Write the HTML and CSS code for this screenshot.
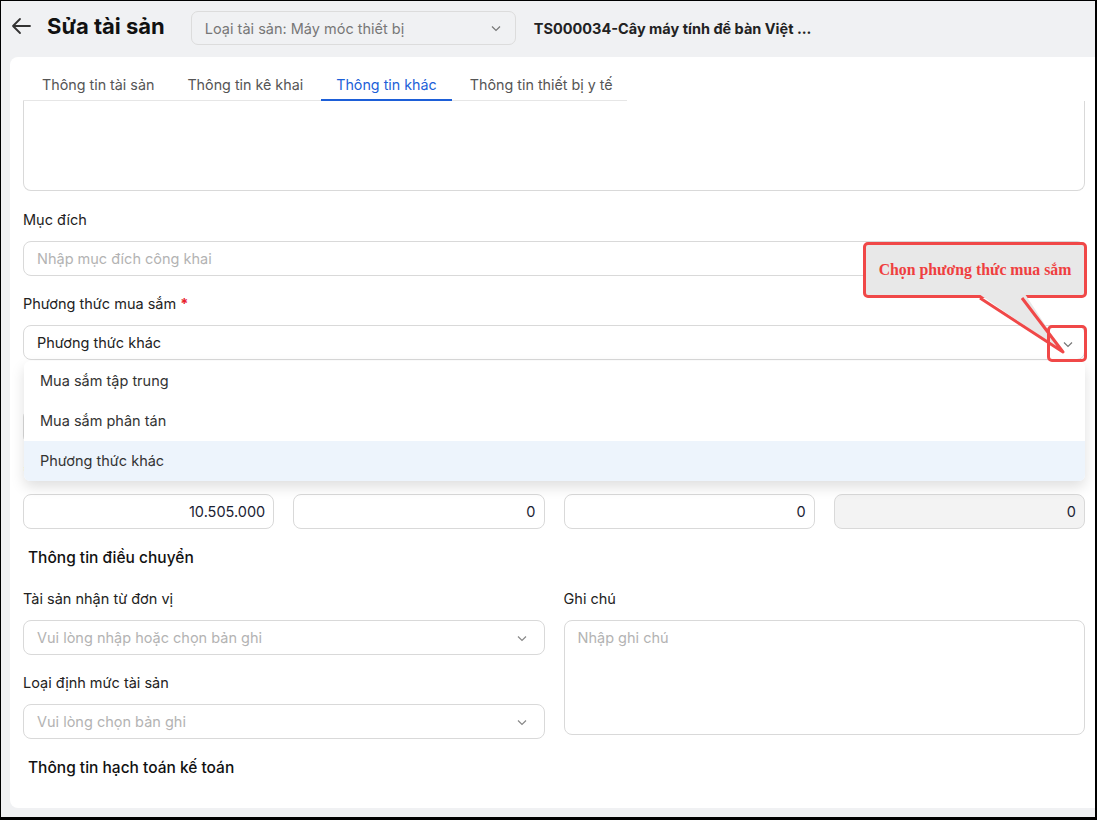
FILE: index.html
```html
<!DOCTYPE html>
<html lang="vi">
  <head>
    <meta charset="UTF-8" />
    <meta name="viewport" content="width=device-width, initial-scale=1.0" />
    <title>Sửa tài sản</title>
    <link rel="stylesheet" href="styles.css">
  </head>
  <body>
    <div class="app">
      <header class="topbar">
        <button class="back" aria-label="Quay lại">
          <svg width="20" height="18" viewBox="0 0 20 18"><path d="M19 9H2M9 2L2 9l7 7" fill="none" stroke="#333" stroke-width="1.8" stroke-linecap="round" stroke-linejoin="round"/></svg>
        </button>
        <h1 class="title">Sửa tài sản</h1>
        <div class="type-select">
          <span>Loại tài sản: Máy móc thiết bị</span>
          <svg class="chev" width="12" height="12" viewBox="0 0 12 12"><path d="M2 4.5l4 4 4-4" fill="none" stroke="#777" stroke-width="1.2"/></svg>
        </div>
        <div class="asset-code">TS000034-Cây máy tính để bàn Việt ...</div>
      </header>

      <section class="card">
        <nav class="tabs">
          <div class="tab">Thông tin tài sản</div>
          <div class="tab">Thông tin kê khai</div>
          <div class="tab active">Thông tin khác</div>
          <div class="tab">Thông tin thiết bị y tế</div>
        </nav>

        <div class="form">
          <div class="box cut"></div>

          <div class="field">
            <label class="label">Mục đích</label>
            <div class="input placeholder">Nhập mục đích công khai</div>
          </div>

          <div class="field purchase">
            <label class="label">Phương thức mua sắm <span class="req">*</span></label>
            <div class="input select">
              <span>Phương thức khác</span>
            </div>

            <ul class="dropdown">
              <li>Mua sắm tập trung</li>
              <li>Mua sắm phân tán</li>
              <li class="current">Phương thức khác</li>
            </ul>

            <div class="callout">Chọn phương thức mua sắm</div>
            <svg class="tail" width="100" height="66" viewBox="0 0 100 66">
              <polygon points="4,0 50,0 88,58" fill="#e8e8e8"/>
              <path d="M5 4L88 58L47 4" fill="none" stroke="#f04848" stroke-width="3" stroke-linejoin="round"/>
            </svg>
            <div class="mark">
              <svg width="12" height="12" viewBox="0 0 12 12"><path d="M2 4.5l4 4 4-4" fill="none" stroke="#777" stroke-width="1.2"/></svg>
            </div>
          </div>

          <div class="field">
            <div class="label"></div>
            <div class="input"></div>
          </div>

          <div class="label-row"><span class="req">*</span></div>
          <div class="grid4">
            <div class="input num">10.505.000</div>
            <div class="input num">0</div>
            <div class="input num">0</div>
            <div class="input num disabled">0</div>
          </div>

          <h2 class="section">Thông tin điều chuyển</h2>

          <div class="grid2">
            <div class="col">
              <div class="field">
                <label class="label">Tài sản nhận từ đơn vị</label>
                <div class="input select placeholder">
                  <span>Vui lòng nhập hoặc chọn bản ghi</span>
                  <svg class="chev" width="12" height="12" viewBox="0 0 12 12"><path d="M2 4.5l4 4 4-4" fill="none" stroke="#888" stroke-width="1.2"/></svg>
                </div>
              </div>
              <div class="field">
                <label class="label">Loại định mức tài sản</label>
                <div class="input select placeholder">
                  <span>Vui lòng chọn bản ghi</span>
                  <svg class="chev" width="12" height="12" viewBox="0 0 12 12"><path d="M2 4.5l4 4 4-4" fill="none" stroke="#888" stroke-width="1.2"/></svg>
                </div>
              </div>
            </div>
            <div class="col">
              <div class="field">
                <label class="label">Ghi chú</label>
                <div class="box note placeholder">Nhập ghi chú</div>
              </div>
            </div>
          </div>

          <h2 class="section">Thông tin hạch toán kế toán</h2>
        </div>
      </section>
    </div>
  </body>
</html>
```

FILE: styles.css
```css
* {
  box-sizing: border-box;
}
body {
  margin: 0;
  font-family: Inter, "Noto Sans", sans-serif;
  font-size: 14px;
  color: #222;
}
.app {
  height: 820px;
  background-color: #f0f1f3;
  border-left: 1px solid #000;
  border-top: 1px solid #000;
  border-right: 2px solid #000;
  border-bottom: 3px solid #000;
}

/* header */
.topbar {
  height: 56px;
  display: flex;
  align-items: center;
  padding-left: 10px;
}
.back {
  background: none;
  border: 0;
  padding: 0;
  width: 20px;
  height: 18px;
  margin-top: -6px;
  cursor: pointer;
}
.title {
  margin: -6px 0 0 16px;
  font-size: 22px;
  font-weight: 700;
  color: #111;
}
.type-select {
  margin: -2px 0 0 26px;
  width: 325px;
  height: 34px;
  border: 1px solid #dcdcdc;
  border-radius: 7px;
  display: flex;
  align-items: center;
  justify-content: space-between;
  padding: 0 13px 0 13px;
  font-size: 14.5px;
  color: #777;
}
.asset-code {
  margin: -2px 0 0 18px;
  font-size: 14.5px;
  font-weight: 700;
  color: #222;
}

/* card */
.card {
  margin-left: 9px;
  height: 751px;
  background-color: #fff;
  border-radius: 8px 0 0 8px;
  padding: 10px 10px 0 13px;
}
.tabs {
  display: flex;
  gap: 3px;
  width: 604px;
  padding-left: 4px;
  border-bottom: 1px solid #e6e6e6;
}
.tab {
  flex-shrink: 0;
  white-space: nowrap;
  height: 34px;
  line-height: 35px;
  padding: 0 15px;
  font-size: 14.3px;
  color: #555;
  border-bottom: 2px solid transparent;
  margin-bottom: -1px;
}
.tab.active {
  color: #1d5fd8;
  border-bottom-color: #1d5fd8;
}

/* form */
.form {
  display: flex;
  flex-direction: column;
}
.box {
  border: 1px solid #d9d9d9;
  border-radius: 8px;
}
.box.cut {
  height: 90px;
  border-top: 0;
  border-radius: 0 0 8px 8px;
  margin-bottom: 19px;
}
.field {
  display: flex;
  flex-direction: column;
  margin-bottom: 18px;
}
.label {
  height: 20px;
  line-height: 20px;
  margin-bottom: 11px;
  font-size: 14.5px;
  color: #222;
}
.req {
  color: #e8202a;
  font-weight: 700;
}
.input {
  height: 35px;
  border: 1px solid #d9d9d9;
  border-radius: 8px;
  padding: 0 13px;
  display: flex;
  align-items: center;
  font-size: 14.5px;
  color: #222;
}
.select {
  justify-content: space-between;
  padding-right: 16px;
}
.placeholder {
  color: #b3b3b3;
}
.num {
  justify-content: flex-end;
  color: #1b2233;
  padding-right: 8px;
}
.disabled {
  background-color: #f3f3f3;
}

/* dropdown + callout */
.purchase {
  position: relative;
  z-index: 2;
}
.dropdown {
  position: absolute;
  left: 1px;
  right: 0;
  top: 67px;
  margin: 0;
  padding: 0;
  list-style: none;
  background-color: #fff;
  border-radius: 6px;
  box-shadow: 0 6px 14px rgba(0, 0, 0, 0.13);
  overflow: hidden;
}
.dropdown li {
  height: 40px;
  line-height: 39px;
  padding-left: 16px;
  font-size: 14.5px;
  color: #333;
}
.dropdown li.current {
  background-color: #edf4fc;
}
.callout {
  position: absolute;
  left: 840px;
  top: -52px;
  width: 224px;
  height: 56px;
  background-color: #e8e8e8;
  border: 3px solid #f04848;
  border-radius: 5px;
  display: flex;
  align-items: center;
  justify-content: center;
  font-family: "Liberation Serif", "DejaVu Serif", serif;
  font-weight: 700;
  font-size: 15.8px;
  color: #ef3f3f;
}
.tail {
  position: absolute;
  left: 952px;
  top: 0;
}
.mark {
  position: absolute;
  left: 1024px;
  top: 31px;
  width: 40px;
  height: 37px;
  border: 3px solid #f04848;
  border-radius: 5px;
  display: flex;
  align-items: center;
  justify-content: center;
  padding-left: 1px;
}

.label-row {
  height: 20px;
  margin-bottom: 12px;
  font-size: 14px;
  line-height: 20px;
}
.grid4 {
  display: grid;
  grid-template-columns: repeat(4, 1fr);
  gap: 19px;
}
.section {
  margin: 18px 0 20px 5px;
  font-size: 15.5px;
  font-weight: 500;
  color: #111;
  line-height: 22px;
}
.grid2 {
  display: grid;
  grid-template-columns: 1fr 1fr;
  gap: 19px;
}
.grid2 .field:last-child {
  margin-bottom: 0;
}
.box.note {
  height: 115px;
  padding: 8px 13px;
  font-size: 14.5px;
}
```
